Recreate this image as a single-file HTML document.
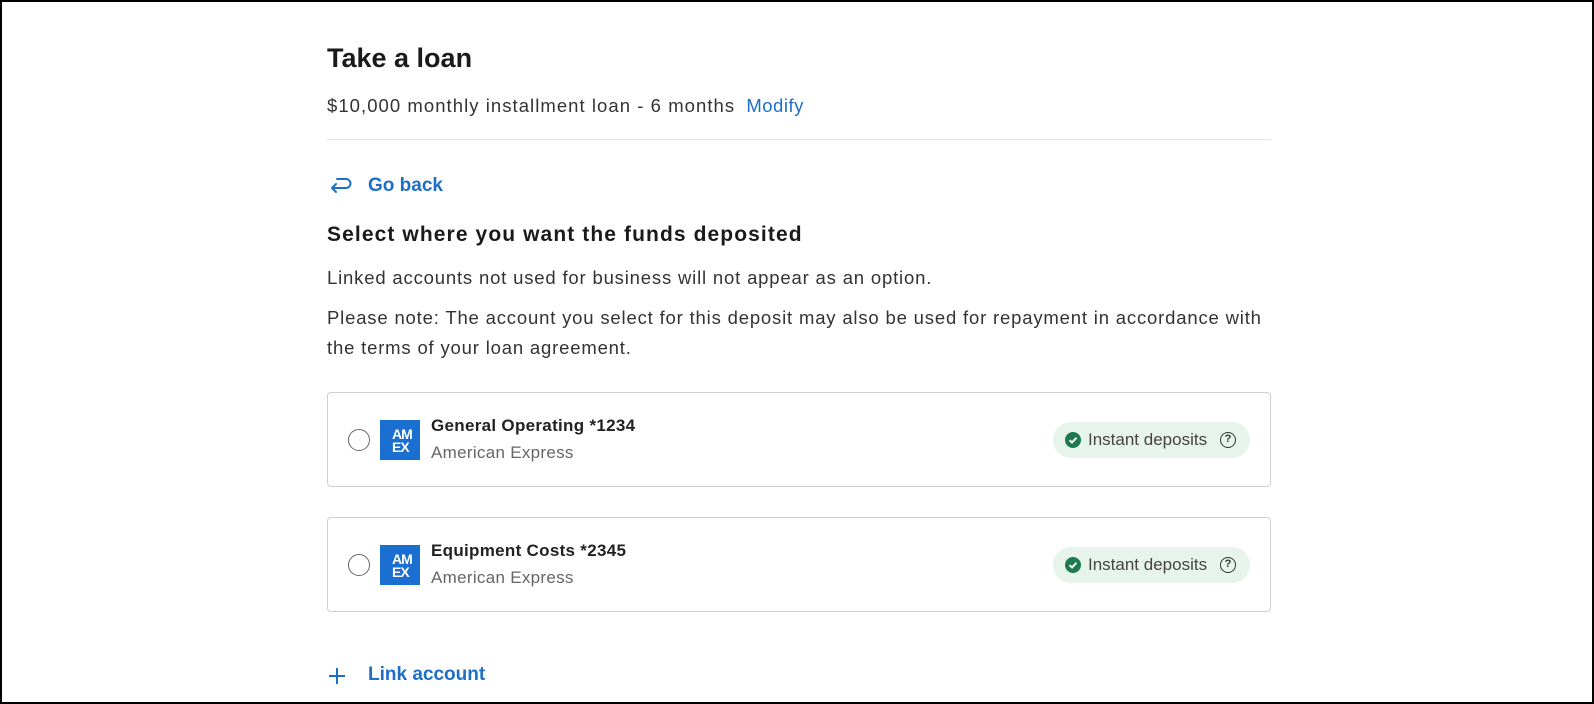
<!DOCTYPE html>
<html><head><style>
*{margin:0;padding:0;box-sizing:border-box}
body{width:1594px;height:704px;background:#fff;font-family:"Liberation Sans",sans-serif;color:#222;position:relative;overflow:hidden}
.frame{position:absolute;left:0;top:0;width:1594px;height:704px;border:2px solid #000}
.a{position:absolute;white-space:nowrap}
.blue{color:#1d6fc7}
.t{font-size:18.5px;letter-spacing:0.82px;color:#333}
.card{position:absolute;left:327px;width:944px;height:95px;border:1px solid #cfcfcf;border-radius:4px}
.radio{position:absolute;left:20px;top:36px;width:22px;height:22px;border:1.5px solid #666;border-radius:50%}
.logo{position:absolute;left:52px;top:27px;width:40px;height:40px;background:#1a6fd0;color:#fff;font-weight:bold;font-size:14px;line-height:13px;padding:8px 0 0 12px;letter-spacing:-1px}
.name{position:absolute;left:103px;top:23px;font-size:17px;letter-spacing:0.3px;font-weight:bold;color:#222}
.bank{position:absolute;left:103px;top:50px;font-size:17px;letter-spacing:0.3px;color:#666}
.pill{position:absolute;right:20px;top:29px;height:36px;width:197px;background:#e6f4ec;border-radius:18px;font-size:17px;color:#444;padding:8px 0 0 35px}
.chk{position:absolute;left:12px;top:10px;width:16px;height:16px}
.q{position:absolute;right:14px;top:10px;width:16px;height:16px;border:1.5px solid #333;border-radius:50%;font-size:11px;font-weight:bold;text-align:center;line-height:13px;color:#333}
</style></head><body>
<div class="frame"></div>
<div class="a" style="left:327px;top:43px;font-size:27px;font-weight:bold;color:#1a1a1a">Take a loan</div>
<div class="a t" style="left:327px;top:95px;letter-spacing:1.05px">$10,000 monthly installment loan - 6 months <span class="blue" style="margin-left:5px;letter-spacing:0.5px">Modify</span></div>
<div class="a" style="left:327px;top:139px;width:944px;height:1px;background:#e4e4e4"></div>
<svg class="a" style="left:329px;top:176px" width="24" height="20" viewBox="0 0 24 20"><path d="M8 3 H17 a4.5 4.5 0 0 1 0 9 H3 M7 8 L3 12 L7 16" fill="none" stroke="#1d6fc7" stroke-width="2" stroke-linecap="round" stroke-linejoin="round"/></svg>
<div class="a blue" style="left:368px;top:175px;font-size:19px;font-weight:bold">Go back</div>
<div class="a" style="left:327px;top:223px;font-size:21px;letter-spacing:1.1px;font-weight:bold;color:#1a1a1a">Select where you want the funds deposited</div>
<div class="a t" style="left:327px;top:267px">Linked accounts not used for business will not appear as an option.</div>
<div class="a t" style="left:327px;top:303px;line-height:30px;white-space:normal;width:960px">Please note: The account you select for this deposit may also be used for repayment in accordance with the terms of your loan agreement.</div>
<div class="card" style="top:392px"><div class="radio"></div><div class="logo">AM<br>EX</div><div class="name">General Operating *1234</div><div class="bank">American Express</div><div class="pill"><svg class="chk" viewBox="0 0 16 16"><circle cx="8" cy="8" r="8" fill="#1c7a4e"/><path d="M4.5 8.2 L7 10.5 L11.5 5.8" fill="none" stroke="#fff" stroke-width="2"/></svg>Instant deposits<div class="q">?</div></div></div>
<div class="card" style="top:517px"><div class="radio"></div><div class="logo">AM<br>EX</div><div class="name">Equipment Costs *2345</div><div class="bank">American Express</div><div class="pill"><svg class="chk" viewBox="0 0 16 16"><circle cx="8" cy="8" r="8" fill="#1c7a4e"/><path d="M4.5 8.2 L7 10.5 L11.5 5.8" fill="none" stroke="#fff" stroke-width="2"/></svg>Instant deposits<div class="q">?</div></div></div>
<svg class="a" style="left:328px;top:667px" width="18" height="18" viewBox="0 0 18 18"><path d="M9 1V17M1 9H17" stroke="#1d6fc7" stroke-width="2"/></svg>
<div class="a blue" style="left:368px;top:664px;font-size:19px;font-weight:bold">Link account</div>
</body></html>
